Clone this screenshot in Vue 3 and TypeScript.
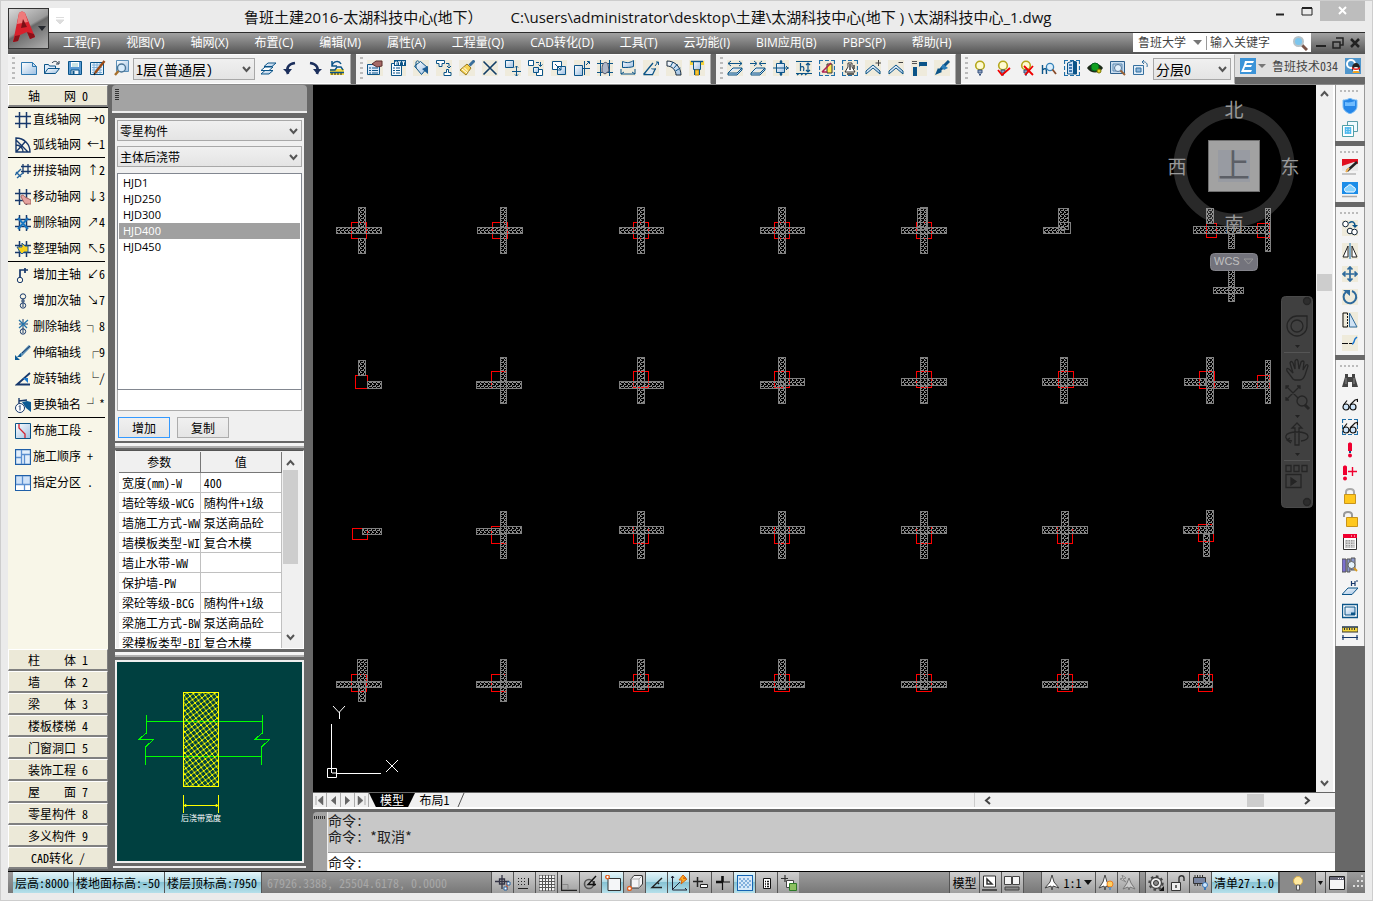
<script setup lang="ts">
import { ref } from 'vue'

const B = '#0b5488'
const N = '#17386b'
const L = (d: string, c: string = B, w: number = 1): string =>
  `<path d="${d}" fill="none" stroke="${c}" stroke-width="${w}"/>`
const F = (d: string, f: string, c: string = 'none', w: number = 1): string =>
  `<path d="${d}" fill="${f}" stroke="${c}" stroke-width="${w}"/>`
const C = (x: number, y: number, r: number, f: string = 'none', c: string = B, w: number = 1): string =>
  `<circle cx="${x}" cy="${y}" r="${r}" fill="${f}" stroke="${c}" stroke-width="${w}"/>`

const G = 'url(#ice)'
const bg = F('M0 0h16v16H0z', '#efebdb')
const bulb =
  C(8, 5.5, 4.3, '#fffbd0', '#b5a81c', 1.6) + F('M6 10h4v3H6z', '#8fa3c4', '#35507c') + F('M7 14h2v1.5H7z', '#35507c')
const slab = F('M1 13l5-5h9l-5 5zM1 13v2h9l5-5V8', G, B)
const grid = L('M4.500 0v16M11.500 0v16M0 4.500h16M0 11.500h16', N, 1.5)
const glasses =
  C(4, 11, 3, '#cfe6fb', '#111', 1.2) + C(11, 11, 3, '#cfe6fb', '#111', 1.2) + L('M1.500 9L5 4.500M8 9l5-5 2.500-.5V6M7 11h1', '#111', 1.2)
const corners = L('M0.500 4V.5H4M6 .5h4M12 .5h3.500V4M15.500 6v4M15.500 12v3.500H12M10 15.500H6M4 15.500H.5V12M.5 10V6', '#1d6ea8', 1.2)

const icons: Record<string, string> = {
  fresh: F('M.5 2.500h11l4 4v8H.5z', G, '#2f78b0') + L('M11.500 2.500v4h4', '#2f78b0'),
  open: F('M.5 13.500v-9h4l1 1.500h6v3', '#dceafa', B) + F('M.5 13.500L4 8.500h11.500l-4 5z', G, B) + L('M8 3c2-2.500 5-2 6 .5M15 1v3h-3', '#234'),
  save: F('M1.500 1.500h13v13h-13z', '#5a9bd4', B) + F('M4 2h8v5H4z', '#fff') + F('M4 10h8v4.500H4z', '#eef5fc', B) + F('M5.500 11h2v3h-2z', B) + L('M5 4h6M5 6h6', '#9cc'),
  edit: F('M.5 2.500h13v12H.5z', '#e9f2fb', B) + L('M2 5h10M2 7.500h10M2 10h10M2 12.500h10M4 3v11M7 3v11M10 3v11', '#7fb0d8') + L('M14.500 1L5 13', '#9a4a16', 2.4) + L('M5 13l-1 2', '#222', 1.6),
  find: F('M3.500.5h12v11h-12z', G, '#5b8fb8') + C(8.500, 8, 4, '#d7ebfb', '#4b7596', 1.4) + L('M5.500 11L2 15', '#a8702c', 2.4),
  layers: F('M1 14l4-3.500h8L9 14z', G, B) + F('M1 10.500L5 7h8l-4 3.500z', '#fff', B) + F('M4 6.500L8 3h8l-4 3.500z', G, B),
  undo: L('M5 14C3 8 5 4 12 3', '#1c2f5c', 2.6) + F('M0 9h9l-4 5z', '#1c2f5c'),
  redo: L('M11 14c2-6 0-10-7-11', '#1c2f5c', 2.6) + F('M16 9H7l4 5z', '#1c2f5c'),
  ruler: L('M3 6c1-5 7-6 9-2M3 1v5h5', B, 1.5) + F('M1 9h14v6H1z', '#f4d63c') + L('M1 10h5l2-3h4l2 3M1 12.500h14', B, 1.4) + L('M3 15v-2M6 15v-2M9 15v-2M12 15v-2', '#222'),
  props: F('M.5 4.500h12v10H.5z', '#dceafa', B) + L('M2 8h2M5 8h6M2 10.500h2M5 10.500h6M2 13h2M5 13h6') + F('M5 4l4-3h6v5l-5 1z', '#a66a66', '#5c3032'),
  att: F('M1.500 3.500h10v12h-10z', '#f6fafe', B) + F('M4 0h12v6H4z', B) + L('M5.500 5V2h1.500v3M8 1.800h3M9.500 2v3M12 1.800h3M13.500 2v3', '#fff') + L('M3 8h2M6 8h4M3 10.500h2M6 10.500h4M3 13h2M6 13h4'),
  bucket: F('M1.500 6l6-4.500 7 6-6 7z', G, B) + L('M3 8V2c1-2 3-1 3 0') + F('M15 6v8l-6-5z', '#1b5d94'),
  swap: F('M.5.5h8v3H6v3H3v-3H.5z', '#fff', B) + F('M8 15.500v-3h2.500v-3h2v3H15v3z', '#fff', B) + L('M10 3.500h3v3M11 6l2 2 2-2'),
  brush: L('M15.500.5l-5 5', '#3a6f9c', 3) + F('M8 4l4 4-5 7-6-5z', '#f6d354', '#9a7a20') + L('M3 9l5 4M5 7.500l4 4', '#fff'),
  cut: L('M1.500 1.500l13 13M14.500 1.500l-13 13', '#123e66', 1.6),
  move: F('M.5.5h8v7h-8z', G, B) + L('M11.500 6v10M7 11.500h9M10 7.500l1.500-1.500L13 7.500M10 14.500l1.500 1.500 1.500-1.500'),
  copy: F('M.5.5h5v5h-5zM8.500 9.500h6v6h-6z', '#fff', B) + F('M5.500 7.500h5v5h-5z', G, B) + L('M8 2.500h3M12.500 2v4M10.500 4.500l2 2 2-2'),
  dup: F('M1.500 1.500h9v8h-9z', '#fff', B) + F('M6.500 6.500h8v8h-8z', G, B) + L('M4 4l6 6M10 7v3H7'),
  stretch: F('M.5 5.500h8v10h-8z', G, B) + L('M10.500 1v14M8 8.500h8', B) + L('M12 5l3-3M13 1.500h2.500V4'),
  hash: L('M3.500 0v16M12.500 0v16M0 3.500h16M0 12.500h16') + F('M5 9c0-7 4-8 6-5l1 7-4 3-3-2z', '#aeb7c8', '#556'),
  wall: F('M2.500 1.500c5 2 8 1 11-1v6c-3 1-6 1-11 1z', G, B) + L('M1 9v5h14V9M1 14l3-2M15 14l-3-2'),
  tri: L('M.5 14.500L10 3M.5 14.500h9l3-6', B, 1.3) + L('M8 9h5M13 2h2.500v3M15 2l-3 4') + F('M3 14l5-5 2 1-1 4z', '#dceafa'),
  fan: F('M1 1c8 0 14 6 14 14h-5C10 10 6 6 1 6z', G, '#1c2f45') + L('M4.500 6.500L7 2M7.500 8.500l4-4.500M9.500 11l5-3'),
  drill: F('M1 1h14v4H1z', '#f6d53c') + F('M4.500 1.500h7v8h-7z', G, B) + L('M2 1.500h12', B, 1.4) + F('M6 10h4v5H6z', '#f6c531', '#b88a10') + L('M5.500 9v6M10.500 9v6'),
  slabOut: slab + L('M1 3.500h14M4 1L1 3.500 4 6M12 1l3 2.500L12 6'),
  slabIn: slab + L('M0 3.500h6M16 3.500h-6M4 1l3 2.500L4 6M12 1L9 3.500 12 6'),
  node: F('M3.500 3.500h8v9h-8z', G, B) + L('M8 0v3M8 13v3M0 8h16M13 6l2 2-2 2') + C(8, 2, 1, B) + C(8, 14, 1, B),
  height: L('M0 1.500h16M0 13.500h16M1 15l2-1.500M5 15l2-1.500M9 15l2-1.500M4.500 3v8M4.500 7c3-1 4 0 3 4M12 3v9M10 5l2-2 2 2M10 10l2 2 2-2', B, 1.2),
  pick: corners + F('M8 4h5v9H8z', '#ffe94f', '#333') + L('M3 12L12 3M3 12h5', '#b02050', 1.5),
  tower: corners + F('M6 3h4v4l3 5H3l3-5z', '#fff', '#333') + L('M5 14h7M8 4v6M12 5v4', '#333', 1.4),
  roofPlus: F('M1 11l7-6 7 6v3l-7-6-7 6z', G, B) + L('M13.500 0v6M10.500 3h6', '#444'),
  roofMinus: F('M1 11l7-6 7 6v3l-7-6-7 6z', G, B) + L('M10.500 2.500H15', '#444'),
  offset: F('M8 2h8v4H9L8 7z', B) + F('M2 7h4v9H2z', B) + L('M1 1.500h5M1 3.500h5', '#555'),
  plug: L('M15 1L5 11', B, 3) + F('M4 8l4 4-7 3z', B) + F('M9 4l5 4-4 2-3-3z', '#2d7fb8'),
  bulb,
  bulbOk: bulb + L('M3 10l4 5 8-7', '#f00000', 1.8),
  bulbNo: bulb + L('M6 6l9 9M15 6l-8 9', '#f00000', 1.8),
  hFind: L('M1.500 5v9M1.500 10c4-3 4-1 4 4', B, 1.4) + C(9, 7, 3.600, '#dceffd', '#3381b7', 1.3) + L('M11.500 9.500L15 14', '#884b2a', 1.8),
  build: corners + F('M3.500 3l5-2 4 1v12h-9z', '#c8e0f6', B) + F('M9 1l4 1v12H9z', B) + L('M5 5h3M5 8h3M5 11h3', '#15589a', 1.5),
  eye: F('M0 8c4-6 12-6 16 0-4 6-12 6-16 0z', '#1b2a18') + C(8, 7, 4, '#10a020', '#062') + C(12, 11, 2, '#e0d020', '#770'),
  zoomWin: F('M.5 1.500h14v12H.5z', '#c9ddf0', '#2d5f8c') + L('M3 4h9v7H3z', '#5b8ab3') + C(8, 8, 3.500, '#e3f0fc', '#56789a') + L('M10.500 10.500L15 15', '#986238', 2),
  rotWin: F('M.5 5.500h10v9H.5z', '#e1edf8', '#35709f') + F('M3 8h5v4H3z', '#8db7dc', '#35709f') + L('M9 2c4-1 6 2 5 5M11 0L9 2l2 2', '#35709f'),
  axisGrid: grid,
  axisArc: L('M1 15V1c8 0 14 6 14 14zM1 8c4 0 7 3 7 7M1 3l12 12M1 15L10 5', N, 1.400),
  axisJoin: L('M8 1v10M13 1v10M6 3.500h10M6 8.500h10', N, 1.3) + L('M0 12l6-6M2 15l6-5M1 9l5 5', '#2465a0', 1.4),
  axisMove: grid + F('M6 8c0-3 3-2 4 0l6 3v4h-6z', '#e5a3a0', '#a4645f'),
  axisDel: grid + L('M3 3l10 11M13 3L3 14', '#1a78c2', 2),
  axisFix: grid + F('M2 6h5V2l3 3h3v6H9l-2 2-2-2z', '#f5cf1c', '#205b96'),
  addMain: C(5, 13, 2.700, 'none', N) + L('M5 10V3h8M10 1v5', N, 1.7),
  addSub: C(8, 3.500, 2.700, 'none', N) + C(8, 12.500, 2.700, 'none', N) + L('M8 5v9M6 8h4', N),
  delAxis: C(8, 12.500, 2.700, 'none', N) + L('M8 0v14M4 5h9', N) + L('M4 1l8 8M13 1L4 9', '#2074ad', 1.3),
  scaleAxis: L('M15 1L5 11', '#5b8fb5', 3) + L('M15 1L7 8', N) + F('M0 15v-5l5 5zM6 8v4H2z', '#0d5a94'),
  rotAxis: L('M15 2L2 13.500h13', N, 1.800) + F('M8 7h5v5z', '#1b7bd0'),
  renAxis: L('M4 1v8M4 4l8-1', N, 1.4) + F('M7 5l5-1 4 1v10l-5-4z', '#0d5a94') + C(5, 11, 4.500, '#fff', N) + L('M5 8.500v5M4 9.500l1-1', N),
  section: F('M.5.5h15v15H.5z', G, B) + L('M4 1v4l6 6v4', '#d32230', 1.3),
  order: F('M.5.5h15v15H.5z', '#e2eefb', '#1f5fa8', 1.3) + L('M6.500 1v14M1 8.500h5M7 5.500h8M9.500 6v9', '#5b8fd0', 1.3),
  zone: F('M.5.5h15v15H.5z', '#cfe2f8', '#1f5fa8', 1.3) + F('M1 10h14v5H1z', '#fff') + L('M7.500 1v8M1 9.500h14M9.500 9v6', '#5b8fd0', 1.3),
  shield: F('M8 0c3 2 5 2 7 2v6c0 4-3 6-7 8-4-2-7-4-7-8V2c2 0 4 0 7-2z', '#2586e8', '#7dbff7') + F('M3 4c4 1 7 0 10-1v5H3z', '#70bcff'),
  sheets: F('M5.500.5h10v10h-10z', '#eefaff', '#5a9da8') + F('M.5 4.500h11v11H.5z', '#fff', '#4fa0a8') + L('M3 7h6M3 9.500h6M3 12h6M3.500 6v7M6 6v7M8.500 6v7', '#4cb8ee', 1.5),
  pen: F('M0 0h16v12H0z', '#e8e8e8') + F('M0 0h16v5l-4-2-12 4z', '#e01020') + L('M15 3L5 12', '#222', 2.4) + L('M7 9l-3 4', '#f0b050', 2) + L('M0 15h14', '#999'),
  cloud: F('M0 0h16v12H0z', '#1c8de8') + F('M4 10c-3-2-1-5 1-5 1-3 5-3 6 0 3 0 3 4 1 5z', '#86d2ff', '#fff') + L('M0 14.500h15', '#aaa', 1.5),
  circ: bg + C(3.500, 4, 2.800, '#fff', '#123') + C(8, 11, 2.800, '#fff', '#123') + C(12.500, 12, 2.800, '#fff', '#123') + L('M7 3c4-3 6 0 6 3', B, 1.500) + F('M10 5h6l-3 3z', B),
  mirror: bg + L('M8 0v16', '#1673b5') + F('M6 3v11H1zM10 3v11h5z', '#fff', '#222'),
  cross: bg + L('M8 1v14M1 8h14M5.500 3.500L8 1l2.500 2.500M5.500 12.500L8 15l2.500-2.500M3.500 5.500L1 8l2.500 2.500M12.500 5.500L15 8l-2.500 2.500', '#2e6a9c', 1.700),
  rot: bg + L('M4 3a6.300 6.300 0 1 0 6-1', '#2e6a9c', 2) + F('M1 1h7v6z', '#2e6a9c'),
  skew: bg + L('M5.500 1H1v14h4.500', '#111') + `<path d="M5.500 1v14" stroke="#111" stroke-dasharray="2 1"/>` + F('M7.500 1v14H15z', '#cfe2f4', '#2e6a9c'),
  ext: bg + L('M0 8.500h6M7 8.500h3', '#111', 1.2) + L('M10 9c2 0 2-3 3-5l2-2', '#1673d0', 1.4),
  bino: F('M3 1h3v3h4V1h3v3l3 10h-6V9H6v5H0L3 4z', '#444') + L('M4 5v6M12 5v6', '#888'),
  glasses,
  glassesAll: corners + glasses,
  bang: F('M6 2c0-2 4-2 4 0v7H6z', '#f00030') + F('M7 9h2v2H7z', '#0b5488') + C(8, 13.500, 2, '#f00030', 'none'),
  bangPlus: F('M1 2c0-2 4-2 4 0v8H1z', '#f00030') + C(3, 13.500, 2, '#f00030', 'none') + L('M10.500 2v9M6 6.500h9', '#f00030', 1.400),
  lock: L('M4 7V4c0-4 8-4 8 0v3', '#aaa', 2) + F('M2.500 6.500h11v9h-11z', '#ffc81e', '#c8931a'),
  unlock: L('M2 6V4c0-4 8-4 8 0v3', '#999', 2) + F('M4.500 6.500h11v9h-11z', '#ffc81e', '#c8931a'),
  cal: F('M1.500 3.500h13v12h-13z', '#fff', '#333') + F('M1 0h14v4H1z', '#f00030') + F('M3.500 6h9v8h-9z', '#999') + L('M4 8h9M4 10.500h9M4 13h9M6 6v8M8.500 6v8M11 6v8', '#ddd') + L('M9 2h1M12 2h1', '#fff'),
  books: F('M0 2h4v13H0z', '#7b70d0', '#555') + F('M5 2h3v13H5zM9 1h4v12H9z', '#8c98cc', '#555') + C(9.500, 8, 3.500, '#e4f2fc', '#666') + L('M12 11l3 3', '#d69a20', 2),
  hSlab: F('M0 14.500L6 8h10l-6 6.500z', G, B) + L('M9.500 1v5M13 1v5M9.500 3.500H13M14 1h2', N, 1.2),
  frame: F('M.5 1.500h15v13H.5z', '#fff', B, 1.4) + F('M3 4h10v8H3z', G, B) + F('M9 9.500h4V12H9z', B),
  scale: F('M0 1h16v5H0z', '#f4d63c', '#333') + L('M2.500 2v2M5 2v2M7.500 2v2M10 2v2M12.500 2v2', '#333') + L('M0 11.500h16M1 9v5M15 9v5M0 1h16', N, 1.2),
  infer: L('M7 0v14M0 6.500h14M4.500 4h5v5h-5z', '#334', 1.300) + L('M12 7v8', '#e05020', 1.400) + F('M9 12h3v3H9zM12 7h3v3h-3z', '#fff', '#2864a0'),
  snap: `<path d="M1 3.500h9M1 6.500h9M1 9.500h9" stroke="#222" stroke-dasharray="1 2"/>` + L('M11.500 3v7M1 13.500h10', '#222'),
  gridOn: F('M0 0h16v16H0z', '#f4f4f4', '#444') + L('M3.500 0v16M6.500 0v16M9.500 0v16M12.500 0v16M0 3.500h16M0 6.500h16M0 9.500h16M0 12.500h16', '#555'),
  ortho: L('M.5 0v15.500H16', '#222', 1.3) + L('M1 9.500h6V15', '#888'),
  polar: C(6, 9, 4.500, 'none', '#555', 1.6) + L('M13 1L5 9.500h8M11 6v5', '#111', 1.400),
  osnap: F('M3 3.500h12.500v12H3z', '#f4f6f8', '#333') + C(2.500, 2, 1.800, '#fff', '#e06020', 1.3),
  osnap3: F('M4 4l3-3.500h8.500V9L12 13H4z', '#f4f4f6', '#333') + L('M12 4v9M4 4h8l3.500-3.500', '#aaa') + C(2.500, 13.500, 2, '#fff', '#e06020', 1.3),
  otrack: L('M13 3L3 12.500h10M8 7l2 2', '#222', 1.4),
  ducs: L('M1.500 1v14H16M2 14L9 7M0 3l1.500-2L3 3M14 13l2 2', '#223') + F('M12 0l3 3h-3l4 1-6 5 1-4H8z', '#ffb020', '#d06010'),
  dyn: L('M4.500 2v10M0 6.500h10', '#222', 1.500) + F('M7.500 9.500h7v3h-7z', '#fff', '#222'),
  lwt: L('M7.500 1v6M1 7h7', '#111', 2.600) + L('M7.500 7v8M7 7h8', '#111', 1.2),
  tpy: F('M0 0h16v16H0z', '#d7e9f8', '#1464b4', 2) + `<path d="M2 4h12M2 8h12M2 12h12" stroke="#83b0dc" stroke-width="2" stroke-dasharray="2 2"/><path d="M4 6h10M4 10h10" stroke="#83b0dc" stroke-width="2" stroke-dasharray="2 2"/>`,
  qp: F('M4.500 3.500h7v10h-7z', '#fff', '#111') + L('M6 6.500h1M8 6.500h2M6 9h1M8 9h2M6 11.500h1M8 11.500h2', '#111', 1.3),
  sc: L('M4 0v7M0 3.500h7', '#333', 1.2) + F('M5.500 5.500h7v7h-7z', '#fff', '#444') + F('M8.500 8.500h7v7h-7z', '#8cc060', '#2c7a28'),
  paper: F('M1.500 1h12v11h-12z', '#fff', '#333') + L('M5 4v5h5zM0 15h15', '#333', 1.5),
  tiles: F('M0.500 1.500h7v8h-7zM8.500 1.500h7v8h-7z', '#f4f4f4', '#444') + F('M1 12h14v3H1z', '#888', '#444'),
  anno: F('M8 0l2 7 5 6-6-2-1 4-1-4-6 2 5-6z', '#fff', '#444'),
  annoVis: F('M7 0l2 7 4 6-5-2-1 4-1-4-5 2 4-6z', '#fff', '#444') + C(12, 9, 3, '#ffd060', '#f08020') + F('M11 12h2v3h-2z', '#5b8fc0'),
  annoAdd: F('M9 3l2 5 4 6-5-2-1 3-1-3-5 2 4-6z', '#ccc', '#777') + F('M2 0l4 3-3 1 3 3-6-3 3-1z', '#ddd', '#888'),
  gear: C(8, 8, 5.500, '#eee', '#444', 1.3) + `<circle cx="8" cy="8" r="6.700" fill="none" stroke="#444" stroke-width="2" stroke-dasharray="2.600 2.600"/>` + C(8, 8, 2.500, '#888', '#333') + F('M16 11v5h-5z', '#111'),
  uilock: F('M1.500 7.500h9v8h-9z', '#eee', '#333') + L('M9 7V3c0-3 5-3 5 0v3M6 10v3', '#333', 1.4),
  chip: F('M1.500 2.500h12v6h-12z', '#7884a0', '#333') + L('M3 0v2M5.500 0v2M8 0v2M10.500 0v2M3 9v2M5.500 9v2M8 9v2', '#333') + C(13, 10, 2.500, '#cfe6fb', '#3a78b8') + F('M12 12h2v3h-2z', '#3a78b8'),
  lamp: C(8, 6, 4.500, '#ffe9a0', '#d8b050') + F('M6.500 10h3v5h-3z', '#eee', '#555'),
  screen: F('M.5 1.500h15v13H.5z', '#f6f6f6', '#222') + F('M1 2h14v3H1z', '#667') + L('M9 3.500h1M11 3.500h1M13 3.500h1', '#fff'),
}

const fileTools: string[] = ['fresh', 'open', 'save', 'edit', 'find']
const floorTools: string[] = ['layers', 'undo', 'redo', 'ruler']
const editTools: string[] = ['props', 'att', 'bucket', 'swap', 'brush', 'cut', 'move', 'copy', 'dup', 'stretch', 'hash', 'wall', 'tri', 'fan', 'drill']
const slabTools: string[] = ['slabOut', 'slabIn', 'node', 'height', 'pick', 'tower', 'roofPlus', 'roofMinus', 'offset', 'plug']
const viewTools: string[] = ['bulb', 'bulbOk', 'bulbNo', 'hFind', 'build', 'eye', 'zoomWin', 'rotWin']
const sideGroups: string[][] = [
  ['shield', 'sheets'],
  ['pen', 'cloud'],
  ['circ', 'mirror', 'cross', 'rot', 'skew', 'ext'],
  ['bino', 'glasses', 'glassesAll', 'bang', 'bangPlus', 'lock', 'unlock', 'cal', 'books', 'hSlab', 'frame', 'scale'],
]
const modeTools: string[] = ['infer', 'snap', 'gridOn', 'ortho', 'polar', 'osnap', 'osnap3', 'otrack', 'ducs', 'dyn', 'lwt', 'tpy', 'qp', 'sc']
const activeModes = ref<string[]>(['osnap', 'otrack', 'ducs', 'tpy'])

const menus: string[] = ['工程(F)', '视图(V)', '轴网(X)', '布置(C)', '编辑(M)', '属性(A)', '工程量(Q)', 'CAD转化(D)', '工具(T)', '云功能(I)', 'BIM应用(B)', 'PBPS(P)', '帮助(H)']

interface Command { icon: string; name: string; key: string; rule?: boolean }
const commands: Command[] = [
  { icon: 'axisGrid', name: '直线轴网', key: '→0' },
  { icon: 'axisArc', name: '弧线轴网', key: '←1' },
  { icon: 'axisJoin', name: '拼接轴网', key: '↑2', rule: true },
  { icon: 'axisMove', name: '移动轴网', key: '↓3' },
  { icon: 'axisDel', name: '删除轴网', key: '↗4' },
  { icon: 'axisFix', name: '整理轴网', key: '↖5' },
  { icon: 'addMain', name: '增加主轴', key: '↙6', rule: true },
  { icon: 'addSub', name: '增加次轴', key: '↘7' },
  { icon: 'delAxis', name: '删除轴线', key: '┐8' },
  { icon: 'scaleAxis', name: '伸缩轴线', key: '┌9' },
  { icon: 'rotAxis', name: '旋转轴线', key: '└/' },
  { icon: 'renAxis', name: '更换轴名', key: '┘*' },
  { icon: 'section', name: '布施工段', key: '-', rule: true },
  { icon: 'order', name: '施工顺序', key: '+' },
  { icon: 'zone', name: '指定分区', key: '.' },
]
const categories: string[] = ['柱　　体 1', '墙　　体 2', '梁　　体 3', '楼板楼梯 4', '门窗洞口 5', '装饰工程 6', '屋　　面 7', '零星构件 8', '多义构件 9', 'CAD转化 /']

const members: string[] = ['HJD1', 'HJD250', 'HJD300', 'HJD400', 'HJD450']
const chosen = ref<string>('HJD400')
const params: [string, string][] = [
  ['宽度(mm)-W', '400'],
  ['墙砼等级-WCG', '随构件+1级'],
  ['墙施工方式-WW', '泵送商品砼'],
  ['墙模板类型-WI', '复合木模'],
  ['墙止水带-WW', ''],
  ['保护墙-PW', ''],
  ['梁砼等级-BCG', '随构件+1级'],
  ['梁施工方式-BW', '泵送商品砼'],
  ['梁模板类型-BI', '复合木模'],
]

/* left, top, right, bottom in model-space pixels */
type Box = [number, number, number, number]
const columns: Box[] = [
  [351, 222, 367, 239], [492, 222, 508, 239], [633, 222, 649, 239], [774, 222, 790, 239], [916, 222, 932, 239], [1206, 223, 1217, 238], [1257, 223, 1270, 238],
  [355, 375, 368, 389], [491, 371, 507, 389], [633, 371, 649, 388], [774, 371, 790, 388], [916, 371, 932, 388], [1058, 371, 1074, 388], [1199, 371, 1215, 389], [1257, 375, 1270, 389],
  [352, 528, 368, 540], [491, 526, 507, 544], [633, 526, 649, 544], [774, 526, 790, 544], [916, 526, 932, 544], [1057, 526, 1073, 544], [1198, 524, 1214, 542],
  [351, 674, 367, 692], [491, 674, 507, 692], [633, 674, 649, 692], [774, 674, 790, 692], [916, 674, 932, 692], [1057, 674, 1073, 692], [1198, 674, 1213, 692],
]
const strips: Box[] = [
  [358, 207, 366, 234], [358, 238, 366, 254], [336, 227, 382, 234],
  [500, 207, 507, 254], [477, 227, 523, 234],
  [637, 207, 645, 254], [619, 227, 664, 234],
  [778, 207, 786, 254], [760, 227, 805, 234],
  [920, 207, 928, 254], [901, 227, 947, 234], [917, 208, 927, 230],
  [1058, 208, 1069, 230], [1043, 227, 1065, 234],
  [1206, 208, 1214, 224], [1193, 226, 1271, 234], [1228, 234, 1235, 249], [1265, 208, 1271, 252],
  [1228, 270, 1235, 302], [1213, 287, 1244, 294],
  [358, 360, 366, 376], [367, 381, 382, 389],
  [500, 357, 507, 404], [476, 381, 522, 389],
  [637, 357, 645, 404], [619, 381, 664, 389],
  [778, 357, 786, 404], [760, 381, 784, 389], [780, 378, 805, 386],
  [920, 357, 928, 404], [901, 378, 947, 386],
  [1060, 357, 1068, 404], [1042, 378, 1088, 386],
  [1206, 357, 1214, 404], [1184, 378, 1206, 386], [1206, 381, 1229, 389],
  [1265, 360, 1271, 404], [1242, 381, 1271, 389],
  [362, 528, 382, 535],
  [500, 511, 507, 559], [476, 528, 500, 535], [500, 526, 522, 534],
  [637, 511, 645, 559], [619, 526, 664, 534],
  [778, 511, 786, 559], [760, 526, 805, 534],
  [920, 511, 928, 559], [901, 526, 947, 534],
  [1061, 511, 1069, 559], [1042, 526, 1088, 534],
  [1206, 510, 1214, 534], [1203, 534, 1210, 557], [1183, 526, 1214, 534],
  [357, 659, 368, 682], [358, 682, 366, 702], [336, 681, 382, 688],
  [500, 659, 507, 702], [476, 681, 522, 688],
  [637, 659, 645, 690], [619, 681, 664, 688],
  [778, 659, 786, 690], [760, 681, 805, 688],
  [920, 659, 928, 690], [901, 681, 947, 688],
  [1061, 659, 1069, 690], [1042, 681, 1088, 688],
  [1203, 659, 1210, 684], [1183, 681, 1213, 688],
]

function toggleMode(name: string): void {
  const list = activeModes.value
  activeModes.value = list.includes(name) ? list.filter((n) => n !== name) : [...list, name]
}
</script>

<template>
  <div class="window">
    <header class="titlebar">
      <span class="quick"><svg width="8" height="7"><path d="M0 .5h8M0 3h8L4 7z" fill="#ddd" stroke="#ddd" stroke-width="1" /></svg></span>
      <h1><span>鲁班土建2016-太湖科技中心(地下）</span><span>C:\users\administrator\desktop\土建\太湖科技中心(地下 ) \太湖科技中心_1.dwg</span></h1>
      <div class="winctl">
        <button aria-label="最小化"><svg width="12" height="12"><path d="M2 9.500h8" stroke="#222" stroke-width="2" /></svg></button>
        <button aria-label="最大化"><svg width="12" height="12"><path d="M1 3h10v7H1z" fill="none" stroke="#222" /><path d="M1 3h10" stroke="#222" stroke-width="2" /></svg></button>
        <button class="close" aria-label="关闭"><svg width="10" height="10"><path d="M1 1l7 7M8 1L1 8" stroke="#fff" stroke-width="2" /></svg></button>
      </div>
      <button class="appbtn" aria-label="应用程序菜单">
        <svg width="39" height="39" viewBox="0 0 39 39">
          <path d="M4 33L10 4q3-3 6 0l10 24-5 2-3-7-7 3-2 6z" fill="#d8202c" />
          <path d="M10 4q3-3 6 0l3 9-11 2z" fill="#ee7a7a" />
          <path d="M12 19l2-9 4 8z" fill="#7a1016" />
          <path d="M18 23l3 7 5-2-1-3zM4 33l2-6 5-1-2 6z" fill="#8a1018" />
          <path d="M29 17h8l-4 5z" fill="#25282e" />
        </svg>
      </button>
    </header>

    <nav class="menubar">
      <button v-for="m in menus" :key="m">{{ m }}</button>
      <div class="search">
        <button class="scope">鲁班大学<svg width="15" height="12"><path d="M3 3h9l-4 5z" fill="#777" /></svg></button>
        <input aria-label="搜索" value="输入关键字" />
        <svg class="lens" width="16" height="16"><path d="M9 9l6 6" stroke="#7a5548" stroke-width="3" /><circle cx="6.500" cy="6.500" r="4.500" fill="#7cc6ee" stroke="#b7c3c9" stroke-width="2" /></svg>
      </div>
      <div class="mdi">
        <button aria-label="最小化图形"><svg width="12" height="12"><path d="M1 9h10" stroke="#222" stroke-width="2" /></svg></button>
        <button aria-label="还原图形"><svg width="12" height="12"><path d="M4 1h7v7H8M1 5h7v6H1z" fill="none" stroke="#222" stroke-width="1.500" /></svg></button>
        <button aria-label="关闭图形"><svg width="12" height="12"><path d="M2 2l8 8M10 2l-8 8" stroke="#222" stroke-width="2.500" /></svg></button>
      </div>
    </nav>

    <div class="toolrow">
      <div class="toolbar">
        <i class="grip"></i>
        <button v-for="t in fileTools" :key="t" class="tool" :aria-label="t"><svg width="16" height="16" v-html="icons[t]"></svg></button>
        <label class="combo floor">
          <select aria-label="楼层"><option>1层(普通层)</option></select>
          <svg width="9" height="8"><path d="M1 1l3.500 4L8 1" fill="none" stroke="#555" stroke-width="2" /></svg>
        </label>
        <button v-for="t in floorTools" :key="t" class="tool" :aria-label="t"><svg width="16" height="16" v-html="icons[t]"></svg></button>
      </div>
      <div class="toolbar tan">
        <i class="grip"></i>
        <button v-for="t in editTools" :key="t" class="tool" :aria-label="t"><svg width="16" height="16" v-html="icons[t]"></svg></button>
      </div>
      <div class="toolbar tan">
        <i class="grip"></i>
        <button v-for="t in slabTools" :key="t" class="tool" :aria-label="t"><svg width="16" height="16" v-html="icons[t]"></svg></button>
      </div>
      <div class="toolbar">
        <i class="grip"></i>
        <button v-for="t in viewTools" :key="t" class="tool" :aria-label="t"><svg width="16" height="16" v-html="icons[t]"></svg></button>
        <label class="combo layer">
          <select aria-label="分层"><option>分层0</option></select>
          <svg width="9" height="8"><path d="M1 1l3.500 4L8 1" fill="none" stroke="#555" stroke-width="2" /></svg>
        </label>
      </div>
      <div class="account">
        <svg width="16" height="16"><path d="M0 0h16v16H0z" fill="#3c94d8" /><path d="M5 3h9l-1 2H7L6 7h6l-1 2H5l-1 3h8l-1 2H1L4 7z" fill="#fff" /></svg>
        <svg width="8" height="6"><path d="M0 1h8L4 5z" fill="#777" /></svg>
        <a href="#">鲁班技术034</a>
        <svg width="16" height="16"><path d="M0 0h16v16H0z" fill="#4f96cc" /><circle cx="6" cy="6" r="4" fill="none" stroke="#fff" stroke-width="2" /><ellipse cx="11" cy="10" rx="4" ry="5" fill="#222" /><ellipse cx="11" cy="12" rx="3" ry="3" fill="#fff" /><path d="M7 9q4 3 8 0v2q-4 2-8 0z" fill="#e02020" /><path d="M7 15h8l-2-2H9z" fill="#f5a21c" /></svg>
      </div>
    </div>

    <main class="work">
      <aside class="commands">
        <button class="cat">轴　　网 0</button>
        <ul>
          <li v-for="c in commands" :key="c.name" :class="{ rule: c.rule }">
            <button><svg width="16" height="16" v-html="icons[c.icon]"></svg><span>{{ c.name }}</span><kbd>{{ c.key }}</kbd></button>
          </li>
        </ul>
        <button v-for="c in categories" :key="c" class="cat">{{ c }}</button>
      </aside>

      <aside class="attributes">
        <div class="cap"><i></i></div>
        <section class="picker">
          <label class="combo"><select aria-label="构件大类"><option>零星构件</option></select><svg width="9" height="8"><path d="M1 1l3.500 4L8 1" fill="none" stroke="#555" stroke-width="2" /></svg></label>
          <label class="combo"><select aria-label="构件小类"><option>主体后浇带</option></select><svg width="9" height="8"><path d="M1 1l3.500 4L8 1" fill="none" stroke="#555" stroke-width="2" /></svg></label>
          <ul class="list" role="listbox" aria-label="构件">
            <li v-for="m in members" :key="m" role="option" :aria-selected="m === chosen" :class="{ on: m === chosen }" @click="chosen = m">{{ m }}</li>
          </ul>
          <input class="filter" aria-label="查找构件" />
          <div class="actions"><button class="primary">增加</button><button>复制</button></div>
        </section>
        <div class="splitter upper"></div>
        <section class="params">
          <div class="clip">
            <table>
              <thead><tr><th>参数</th><th>值</th></tr></thead>
              <tbody><tr v-for="p in params" :key="p[0]"><td>{{ p[0] }}</td><td>{{ p[1] }}</td></tr></tbody>
            </table>
          </div>
          <div class="vbar">
            <svg width="9" height="8"><path d="M1 6l3.500-4L8 6" fill="none" stroke="#555" stroke-width="2" /></svg>
            <i></i>
            <svg width="9" height="8"><path d="M1 1l3.500 4L8 1" fill="none" stroke="#555" stroke-width="2" /></svg>
          </div>
        </section>
        <div class="splitter"></div>
        <section class="preview">
          <svg viewBox="117 662 185 199" preserveAspectRatio="xMidYMid meet">
            <g fill="none" stroke="#00ff00" shape-rendering="crispEdges">
              <path d="M146 721.500h116M145 756.500h116" />
              <path d="M146.500 715v18l-8 6.500h15l-8 7.500v18M262.500 715v18l-8 6.500h15l-8 7.500v18" />
            </g>
            <rect x="183.500" y="692.500" width="35" height="94" fill="url(#yhatch)" stroke="#ffff00" />
            <path d="M183.500 795v18M218.500 795v18M184 805.500h34M184 805.500l2-1v2zM218 805.500l-2-1v2z" fill="#ffff00" stroke="#ffff00" />
            <text x="201" y="821" text-anchor="middle">后浇带宽度</text>
          </svg>
        </section>
        <div class="foot"></div>
      </aside>

      <section class="center">
        <div class="viewport">
          <div class="model">
            <svg class="drawing" width="100%" height="100%">
              <defs>
                <linearGradient id="ice" x1="0" y1="0" x2="1" y2="1"><stop offset="0" stop-color="#fff" /><stop offset="1" stop-color="#9cbfe2" /></linearGradient>
                <pattern id="hatch" width="4" height="4" patternUnits="userSpaceOnUse"><path d="M0 0h2v1H0zM2 2h2v1H2zM0 3h1v1H0zM3 1h1v1H3zM1 2h1v1H1z" fill="#8a8a8a" /></pattern>
                <pattern id="yhatch" width="6" height="6" patternUnits="userSpaceOnUse" patternTransform="rotate(8)"><path d="M0 0l6 6M6 0L0 6M-1 5l2 2M5-1l2 2M5 7l2-2M-1 1l2-2" stroke="#ffff00" stroke-width="1" /></pattern>
              </defs>
              <g transform="translate(-313 -85)">
                <g fill="none" stroke="#ff0000"><rect v-for="(b, i) in columns" :key="i" :x="b[0] + 0.5" :y="b[1] + 0.5" :width="b[2] - b[0] - 1" :height="b[3] - b[1] - 1" /></g>
                <g fill="url(#hatch)" stroke="#808080"><rect v-for="(b, i) in strips" :key="i" :x="b[0] + 0.5" :y="b[1] + 0.5" :width="b[2] - b[0] - 1" :height="b[3] - b[1] - 1" /></g>
                <path d="M1058.500 222.500h12v11h-12z" fill="none" stroke="#808080" />
              </g>
            </svg>
            <svg class="ucs" width="80" height="76" fill="none" stroke="#fff">
              <path d="M4.500 67V19M9 68.500h45M.5 63.500h9v9h-9zM5 68h4M4.500 68v-4M6 1l6 6.500L18 1M12.500 7v7M59 55l12 12M71 55L59 67" />
            </svg>
            <svg class="nav" width="166" height="430">
              <g transform="translate(-1150 -85)">
                <circle cx="1234" cy="166" r="54" fill="none" stroke="#bbb" stroke-opacity=".22" stroke-width="13" />
                <rect x="1208.500" y="140.500" width="51" height="51" fill="#a2a2a2" stroke="#6e6e6e" />
                <rect x="1218" y="150" width="32" height="32" fill="#989ba2" />
                <g class="dir" text-anchor="middle">
                  <text x="1234" y="117">北</text><text x="1177" y="174">西</text><text x="1290" y="174">东</text><text x="1234" y="231">南</text>
                </g>
                <text class="top" x="1234" y="177" text-anchor="middle">上</text>
                <rect x="1210.500" y="253.500" width="47" height="17" rx="4" fill="#73737c" stroke="#85858c" />
                <text class="wcs" x="1214" y="265">WCS</text>
                <path d="M1244 259h9l-4.500 5z" fill="none" stroke="#999" />
                <rect x="1281.500" y="296.500" width="31" height="211" rx="4" fill="#404040" stroke="#4a4a4a" />
                <g fill="none" stroke="#252525" stroke-width="1.300">
                  <circle cx="1307" cy="301" r="3.500" fill="#2d2d2d" /><circle cx="1307" cy="502" r="3.500" fill="#2d2d2d" />
                  <path d="M1297 316a10 10 0 1 0 10 10v-10z" /><circle cx="1297" cy="326" r="6" />
                  <path d="M1293 379l-6-8q-1-4 2-2l4 4-3-10q1-3 3 0l2 6v-8q2-3 3 0l1 8 2-7q2-2 3 0l-1 8 3-5q2-1 2 1l-3 9q-2 5-5 5h-5z" />
                  <path d="M1286 386l14 14M1300 386l-14 14M1286 389v-3h3M1297 386h3v3M1286 397v3h3" /><circle cx="1302" cy="401" r="5" fill="#404040" /><path d="M1305 405l4 4" stroke-width="3" />
                  <path d="M1295 445v-17h-3l5-5 5 5h-3v17zM1292 441c-9-1-9-9 5-9s14 8 4 9M1290 438l-3 2 4 3" />
                  <path d="M1286 465.500h5v6h-5zM1294 465.500h5v6h-5zM1302 465.500h5v6h-5zM1286 474.500h15v13h-15z" /><path d="M1291 478v7l5-3.500z" fill="#252525" />
                </g>
                <path d="M1284 352.500h26M1284 460.500h26" stroke="#555" />
                <path d="M1295 345h5l-2.500 3zM1295 415h5l-2.500 3zM1295 453h5l-2.500 3z" fill="#222" />
              </g>
            </svg>
          </div>
          <div class="vscroll">
            <svg width="9" height="8"><path d="M1 6l3.500-4L8 6" fill="none" stroke="#555" stroke-width="2" /></svg>
            <i></i>
            <svg width="9" height="8"><path d="M1 1l3.500 4L8 1" fill="none" stroke="#555" stroke-width="2" /></svg>
          </div>
        </div>
        <div class="tabs">
          <button class="step" aria-label="第一个"><svg width="9" height="9"><path d="M1 0v9M8 0v9L3 4.500z" fill="#666" stroke="#666" stroke-width=".5" /></svg></button>
          <button class="step" aria-label="上一个"><svg width="9" height="9"><path d="M7 0v9L2 4.500z" fill="#666" /></svg></button>
          <button class="step" aria-label="下一个"><svg width="9" height="9"><path d="M2 0v9l5-4.500z" fill="#666" /></svg></button>
          <button class="step" aria-label="最后一个"><svg width="9" height="9"><path d="M8 0v9M1 0v9l5-4.500z" fill="#666" stroke="#666" stroke-width=".5" /></svg></button>
          <button class="tab current">模型</button>
          <button class="tab">布局1</button>
          <svg class="slash" width="8" height="14"><path d="M1 14L7 0" stroke="#555" /></svg>
          <div class="hscroll">
            <svg width="8" height="9"><path d="M6 1L2 4.500 6 8" fill="none" stroke="#444" stroke-width="2" /></svg>
            <i></i>
            <svg width="8" height="9"><path d="M2 1l4 3.500L2 8" fill="none" stroke="#444" stroke-width="2" /></svg>
          </div>
        </div>
        <div class="console">
          <div class="handle"><i></i></div>
          <div class="log">
            <p>命令:</p>
            <p>命令: *取消*</p>
            <label>命令:<input aria-label="命令行" /></label>
          </div>
        </div>
      </section>

      <aside class="side">
        <div v-for="(g, i) in sideGroups" :key="i" class="sidebar">
          <i class="hgrip"></i>
          <button v-for="t in g" :key="t" :aria-label="t"><svg width="16" height="16" v-html="icons[t]"></svg></button>
        </div>
      </aside>
    </main>

    <footer class="status">
      <span class="blue">层高:8000</span><span class="blue">楼地面标高:-50</span><span class="blue">楼层顶标高:7950</span>
      <span class="coords">67926.3388, 25504.6178, 0.0000</span>
      <button v-for="t in modeTools" :key="t" class="mode" :class="{ on: activeModes.includes(t) }" :aria-label="t" @click="toggleMode(t)"><svg width="16" height="16" v-html="icons[t]"></svg></button>
      <div class="right">
        <button class="text">模型</button>
        <button class="mode" aria-label="图纸"><svg width="16" height="16" v-html="icons.paper"></svg></button>
        <button class="mode" aria-label="快速查看"><svg width="16" height="16" v-html="icons.tiles"></svg></button>
        <i class="gap"></i>
        <button class="text scale"><svg width="16" height="16" v-html="icons.anno"></svg>1:1<svg width="8" height="6"><path d="M0 0h8L4 5z" fill="#111" /></svg></button>
        <button class="mode" aria-label="注释可见性"><svg width="16" height="16" v-html="icons.annoVis"></svg></button>
        <button class="mode" aria-label="自动缩放"><svg width="16" height="16" v-html="icons.annoAdd"></svg></button>
        <i class="gap small"></i>
        <button class="mode" aria-label="工作空间"><svg width="16" height="16" v-html="icons.gear"></svg></button>
        <button class="mode" aria-label="锁定界面"><svg width="16" height="16" v-html="icons.uilock"></svg></button>
        <button class="mode" aria-label="硬件加速"><svg width="16" height="16" v-html="icons.chip"></svg></button>
        <span class="blue">清单27.1.0</span>
        <button class="lamp" aria-label="隔离对象"><svg width="16" height="16" v-html="icons.lamp"></svg></button>
        <button class="drop" aria-label="状态栏菜单"><svg width="5" height="4"><path d="M0 0h5L2.500 4z" fill="#111" /></svg></button>
        <button class="mode" aria-label="全屏显示"><svg width="16" height="16" v-html="icons.screen"></svg></button>
        <svg class="resize" width="16" height="18"><path d="M12 3h2v2h-2zM8 8h2v2H8zM12 8h2v2h-2zM4 13h2v2H4zM8 13h2v2H8zM12 13h2v2h-2z" fill="#ddd" /></svg>
      </div>
    </footer>
  </div>
</template>

<style>
body {
  margin: 0;
  background: #ebebeb;
}
</style>

<style scoped>
* {
  box-sizing: border-box;
}
.window {
  --mono: 'Noto Sans Mono CJK SC', 'Noto Sans CJK SC', sans-serif;
  display: flex;
  flex-direction: column;
  height: 100vh;
  min-height: 700px;
  padding: 0 7px 7px;
  border: 1px solid #cdcdcd;
  background: #ebebeb;
  font: 12px/16px var(--mono);
  color: #000;
  overflow: hidden;
}
button,
input,
select {
  font: inherit;
  color: inherit;
  margin: 0;
  padding: 0;
  border: 0;
  border-radius: 0;
  background: none;
}
ul {
  list-style: none;
  margin: 0;
  padding: 0;
}
svg {
  display: block;
  flex: none;
}

/* title */
.titlebar {
  position: relative;
  display: flex;
  flex: none;
  height: 31px;
}
.titlebar h1 {
  display: flex;
  gap: 28px;
  flex: 1;
  margin: 0 0 0 174px;
  font: 15px/32px 'Open Sans', 'Noto Sans CJK SC', sans-serif;
  color: #111;
  white-space: pre;
}
.quick {
  display: flex;
  align-items: center;
  justify-content: center;
  width: 21px;
  margin: 7px 0 0 41px;
  background: #fff;
}
.winctl {
  display: flex;
  height: 20px;
}
.winctl button {
  display: flex;
  align-items: center;
  justify-content: center;
  width: 27px;
}
.winctl .close {
  width: 45px;
  background: #bdbdbd;
}
.appbtn {
  position: absolute;
  z-index: 2;
  left: 0;
  top: 7px;
  width: 41px;
  height: 41px;
  border: 1px solid #333;
  background: linear-gradient(150deg, #d8d8d8, #9a9a9a 45%, #686868 50%, #b0b0b0);
}

/* menu */
.menubar {
  display: flex;
  align-items: center;
  flex: none;
  gap: 26px;
  height: 22px;
  padding: 0 4px 2px 55px;
  border-top: 1px solid #2c2c2c;
  background: linear-gradient(#a2a2a2, #545454);
  font: 12px/19px 'Open Sans', 'Noto Sans CJK SC', sans-serif;
  color: #fff;
  white-space: nowrap;
}
.search {
  display: flex;
  align-items: center;
  width: 178px;
  height: 19px;
  margin-left: auto;
  padding: 0 3px 0 5px;
  background: #fff;
  color: #444;
}
.scope {
  display: flex;
  align-items: center;
  gap: 4px;
  padding-right: 1px;
  border-right: 1px solid #999;
  line-height: 14px;
}
.search input {
  flex: 1;
  min-width: 0;
  padding-left: 3px;
}
.mdi {
  display: flex;
  gap: 5px;
  margin-left: -22px;
}

/* toolbars */
.toolrow {
  display: flex;
  flex: none;
  gap: 5px;
  height: 31px;
  border-bottom: 1px solid #8c8c8c;
  background: #686868;
}
.toolbar {
  display: flex;
  align-items: center;
  height: 30px;
  padding: 0 2px 2px 0;
  border: 1px solid #fff;
  border-right-color: #aaa;
  border-left: 0;
  background: #f2f2f2;
}
.grip {
  flex: none;
  width: 3px;
  height: 22px;
  margin: 0 0 0 4px;
  background: repeating-linear-gradient(#bbb 0 2px, transparent 2px 5px);
}
.toolbar:first-child .grip {
  margin-right: 2px;
}
.tool {
  display: flex;
  justify-content: center;
  width: 23px;
}
.tan .tool svg {
  background: #efebdc;
}
.combo {
  position: relative;
  display: block;
  height: 22px;
}
.combo select {
  width: 100%;
  height: 100%;
  padding-left: 2px;
  border: 1px solid #a8a8a8;
  background: linear-gradient(#f0f0f0, #e4e4e4);
  appearance: none;
}
.combo svg {
  position: absolute;
  right: 4px;
  top: 8px;
  pointer-events: none;
}
.floor,
.layer {
  margin: 2px 1px 0;
  font-size: 14px;
}
.floor {
  width: 122px;
}
.layer {
  width: 78px;
}
.account {
  display: flex;
  align-items: center;
  flex: 1;
  gap: 2px;
  min-width: 0;
  height: 23px;
  margin-left: -5px;
  padding: 0 4px 0 5px;
  background: #e0e0e0;
  white-space: nowrap;
}
.account a {
  flex: 1;
  padding-left: 4px;
  color: #444;
  text-decoration: none;
}

/* work area */
.work {
  display: flex;
  flex: 1;
  min-height: 0;
  background: #686868;
}
.commands {
  display: flex;
  flex-direction: column;
  flex: none;
  width: 100px;
  padding-bottom: 2px;
}
.commands ul {
  flex: 1;
  min-height: 0;
  overflow: hidden;
  border-top: 1px solid #000;
  background: #f8f6e8;
}
.commands li {
  height: 26px;
  margin-right: 3px;
  padding-top: 2px;
}
.commands li:first-child {
  height: 23px;
  padding-top: 0;
}
.commands .rule {
  padding-top: 1px;
  border-top: 1px solid #000;
}
.commands li button {
  display: flex;
  align-items: center;
  gap: 2px;
  width: 100%;
  height: 24px;
  padding-left: 7px;
}
.commands kbd {
  flex: none;
  width: 18px;
  margin-left: auto;
  font: inherit;
  text-align: left;
  white-space: nowrap;
}
.commands li span,
.commands kbd {
  margin-bottom: 2px;
}
.cat {
  flex: none;
  height: 22px;
  border: 1px solid;
  border-color: #fff #808080 #808080 #fff;
  border-bottom-width: 2px;
  background: #ece9d8;
  white-space: pre;
}

/* attribute panel */
.attributes {
  display: flex;
  flex-direction: column;
  flex: none;
  width: 205px;
  padding: 0 9px 3px 7px;
}
.cap {
  height: 28px;
  margin: 0 -3px 5px;
  border-bottom: 2px solid #eee;
  border-radius: 4px 4px 0 0;
  background: #a3a3a3;
}
.cap i {
  display: block;
  width: 4px;
  height: 11px;
  margin: 4px 3px;
  background: repeating-linear-gradient(#333 0 1px, transparent 1px 2px);
}
.picker {
  display: flex;
  flex-direction: column;
  flex: 1;
  min-height: 0;
  padding: 2px 2px 3px;
  background: #f0f0f0;
}
.picker .combo {
  flex: none;
  height: 21px;
  margin-bottom: 5px;
}
.list {
  flex: 1;
  min-height: 0;
  margin-top: 1px;
  overflow: hidden;
  padding: 1px;
  border: 1px solid #828790;
  background: #fff;
  font: 11px/16px 'Open Sans', sans-serif;
}
.list li {
  padding-left: 4px;
}
.list .on {
  background: #a0a0a0;
  color: #fff;
}
.filter {
  flex: none;
  height: 21px;
  border: 1px solid #ababab;
  border-top: 0;
  background: #fff;
}
.actions {
  display: flex;
  flex: none;
  gap: 7px;
  padding: 6px 1px 0;
}
.actions button {
  width: 52px;
  height: 21px;
  border: 1px solid #acacac;
  background: linear-gradient(#f0f0f0, #e5e5e5);
}
.actions .primary {
  border-color: #3399ff;
}
.splitter {
  flex: none;
  height: 5px;
  margin: 3px 0;
  border-bottom: 2px solid #b0b0b0;
  background: #f4f4f4;
}
.upper {
  margin: 2px 0;
}
.params {
  display: flex;
  flex: none;
  height: 199px;
  padding: 1px 4px 0 3px;
  border: 1px solid #fff;
  border-top-color: #555;
  background: #f0f0f0;
}
.clip {
  flex: 1;
  overflow: hidden;
}
.params table {
  width: 100%;
  table-layout: fixed;
  border-collapse: collapse;
  background: #fff;
}
.params th,
.params td {
  height: 20px;
  padding: 0 0 0 3px;
  border: 1px solid #c0c0c0;
  border-width: 0 1px 1px 0;
  line-height: 19px;
  font-weight: 400;
  text-align: left;
  white-space: nowrap;
  overflow: hidden;
}
.params th {
  padding: 0;
  border-color: #777;
  background: #f0f0f0;
  text-align: center;
}
.vbar {
  display: flex;
  flex-direction: column;
  align-items: center;
  width: 17px;
  padding: 7px 0 6px;
}
.vbar i {
  width: 15px;
  height: 94px;
  margin: 3px 0 auto;
  background: #cdcdcd;
}
.preview {
  flex: none;
  height: 203px;
  border: 2px solid #eee;
  background: #004040;
}
.preview svg {
  width: 100%;
  height: 100%;
}
.preview text {
  font: 8px 'Noto Sans CJK SC', sans-serif;
  fill: #fff;
}
.foot {
  height: 2px;
  margin: 3px -2px 0;
  background: #eee;
}

/* drawing */
.center {
  display: flex;
  flex-direction: column;
  flex: 1;
  min-width: 0;
}
.viewport {
  display: flex;
  flex: 1;
  min-height: 0;
  border-right: 2px solid #fff;
}
.model {
  position: relative;
  flex: 1;
  min-width: 0;
  overflow: hidden;
  background: #000;
}
.drawing {
  position: absolute;
  left: 0;
  top: 0;
  shape-rendering: crispEdges;
}
.ucs {
  position: absolute;
  left: 14px;
  bottom: 11px;
}
.nav {
  position: absolute;
  right: 0;
  top: 0;
}
.dir text {
  font: 19px 'Noto Sans CJK SC', sans-serif;
  fill: #999;
}
.top {
  font: 32px 'Noto Sans CJK SC', sans-serif;
  fill: #5c5f66;
}
.wcs {
  font: 11px 'Liberation Sans', sans-serif;
  fill: #c0c0c0;
}
.vscroll {
  display: flex;
  flex-direction: column;
  align-items: center;
  width: 17px;
  padding: 5px 0 4px;
  background: #f0f0f0;
}
.vscroll i {
  width: 15px;
  height: 17px;
  margin: 176px 0 auto;
  background: #cdcdcd;
}
.tabs {
  display: flex;
  flex: none;
  height: 17px;
  border-top: 1px solid #666;
  border-bottom: 2px solid #fff;
  background: #f0f0f0;
}
.step {
  display: flex;
  align-items: center;
  justify-content: center;
  width: 14px;
  border-right: 1px solid #aaa;
}
.tab {
  width: 42px;
  line-height: 14px;
}
.tab:not(.current) {
  padding-right: 3px;
}
.current {
  width: 46px;
  background: #000;
  color: #fff;
  clip-path: polygon(0 0, 100% 0, 85% 100%, 15% 100%);
}
.hscroll {
  display: flex;
  align-items: center;
  width: 361px;
  margin-left: auto;
  padding: 0 24px 0 9px;
  border-left: 1px solid #ccc;
}
.hscroll i {
  width: 17px;
  height: 13px;
  margin: 0 39px 0 auto;
  background: #cdcdcd;
}
.console {
  display: flex;
  flex: none;
  height: 59px;
  margin-top: 3px;
}
.handle {
  width: 14px;
  padding: 4px 1px;
  border-radius: 4px 0 0 0;
  background: #a3a3a3;
}
.handle i {
  display: block;
  height: 3px;
  background: repeating-linear-gradient(90deg, #333 0 1px, transparent 1px 2px);
}
.log {
  display: flex;
  flex-direction: column;
  flex: 1;
  border-left: 1px solid #eee;
  background: #c8c8c8;
  font-size: 14px;
  line-height: 16px;
  color: #222;
}
.log p {
  margin: 0;
  white-space: pre;
}
.log label {
  display: flex;
  margin-top: auto;
  border-top: 1px solid #999;
  background: #fff;
  line-height: 18px;
}
.log input {
  flex: 1;
}

/* right toolbars */
.side {
  display: flex;
  flex-direction: column;
  flex: none;
  gap: 5px;
  width: 30px;
}
.sidebar {
  display: flex;
  flex-direction: column;
  align-items: center;
  padding-bottom: 1px;
  border: 1px solid #999;
  border-width: 0 1px;
  background: #f4f4f4;
}
.hgrip {
  width: 20px;
  height: 2px;
  margin: 5px 0 2px;
  background: repeating-linear-gradient(90deg, #bbb 0 2px, transparent 2px 4px);
}
.sidebar button {
  display: flex;
  align-items: center;
  height: 23px;
}

/* status */
.status {
  display: flex;
  flex: none;
  height: 22px;
  padding-left: 5px;
  border-top: 1px solid #000;
  background: linear-gradient(#9c9c9c, #787878);
  line-height: 21px;
  white-space: nowrap;
}
.blue {
  flex: none;
  padding: 0 4px 0 2px;
  border-right: 1px solid #555;
  background: linear-gradient(#e4f5f9, #b4dde8 45%, #87c3d4 50%, #b6e0ea);
}
.coords {
  flex: none;
  width: 229px;
  padding-left: 5px;
  color: #a8a8a8;
  white-space: pre;
}
.mode,
.text,
.lamp,
.drop {
  display: flex;
  align-items: center;
  justify-content: center;
  flex: none;
  width: 22px;
  border-left: 1px solid #555;
  background: linear-gradient(#cfcfcf, #9f9f9f);
}
.mode.on {
  background: linear-gradient(#e4f5f9, #b4dde8 45%, #87c3d4 50%, #b6e0ea);
}
.right {
  display: flex;
  margin-left: auto;
}
.text {
  width: 30px;
}
.scale {
  width: 54px;
  gap: 3px;
}
.gap {
  width: 18px;
  border-left: 1px solid #555;
}
.gap.small {
  width: 6px;
}
.right .blue {
  border-left: 1px solid #555;
}
.lamp {
  width: 36px;
  background: #8a8a8a;
}
.drop {
  width: 10px;
}
.resize {
  margin-left: 2px;
}
</style>
